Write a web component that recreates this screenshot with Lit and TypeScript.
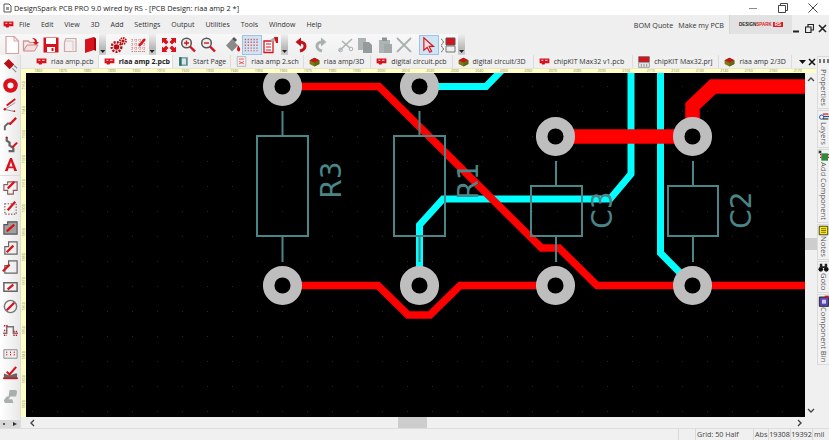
import { LitElement, css, html, svg } from 'lit'
import { customElement } from 'lit/decorators.js'

const MENU = ['File', 'Edit', 'View', '3D', 'Add', 'Settings', 'Output', 'Utilities', 'Tools', 'Window', 'Help']

type TabKind = 'pcb' | 'sch' | 'start' | '3d' | 'prj'
// pad is the space after the label, the tabs in the app are not evenly spaced
const TABS: { label: string; kind: TabKind; pad: number; active?: boolean }[] = [
  { label: 'riaa amp.pcb', kind: 'pcb', pad: 4 },
  { label: 'riaa amp 2.pcb', kind: 'pcb', pad: 2, active: true },
  { label: 'Start Page', kind: 'start', pad: 4 },
  { label: 'riaa amp 2.sch', kind: 'sch', pad: 4 },
  { label: 'riaa amp/3D', kind: '3d', pad: 6 },
  { label: 'digital circuit.pcb', kind: 'pcb', pad: 5 },
  { label: 'digital circuit/3D', kind: '3d', pad: 7 },
  { label: 'chipKIT Max32 v1.pcb', kind: 'pcb', pad: 8 },
  { label: 'chipKIT Max32.prj', kind: 'prj', pad: 6 },
  { label: 'riaa amp 2/3D', kind: '3d', pad: 5 },
]

const DOCK = [
  { label: 'Properties', icon: 'props' },
  { label: 'Layers', icon: 'layers' },
  { label: 'Add Component', icon: 'add' },
  { label: 'Notes', icon: 'notes' },
  { label: 'Goto', icon: 'goto' },
  { label: 'Component Bin', icon: 'bin' },
]

const RED = '#d8121c'

const icon = (body: unknown, size = 18) =>
  html`<svg width=${size} height=${size} viewBox="0 0 18 18" fill="none">${body}</svg>`

const TOP_LEFT = [
  svg`<path d="M3 .5h8l4.500 4.500v12.500H3z" fill="#fff" stroke="#dba0a0" stroke-width="1.200"/><path d="M11 .5V5h4.500" stroke="#dba0a0"/>`,
  svg`<path d="M1.500 15V5h5l1 1.500h5V9" stroke="#c99" stroke-width="1.300" fill="#f4eaea"/><path d="M1.500 15 5 9h11l-3.500 6z" fill="#f7dede" stroke="#c88"/><path d="M10 2c3 0 5 1 5 4l2 0-3 3-3-3h2c0-1.500-1-2.500-3-4z" fill=${RED}/>`,
  svg`<path d="M1.500 1.500h15v15h-15z" fill=${RED}/><path d="M4 2h10v6H4z" fill="#fff"/><path d="M5 11h8v5H5z" fill="#fff"/><path d="M9.500 12h2v3h-2z" fill=${RED}/>`,
  svg`<path d="M5 2.500h10v13H3.500V6z" fill="#f3efef" stroke="#c9a9a9" stroke-width="1.200"/><path d="M3 5h9v11" stroke="#d8c4c4"/>`,
  svg`<path d="M4 3.500 13 1v13l-9 3z" fill=${RED}/><path d="M13 1l2 1.500V15l-2-1z" fill="#a5000a"/>`,
]
const TOP_MID = [
  svg`<circle cx="6.500" cy="11" r="2.800" fill="#b80f16"/><circle cx="6.500" cy="11" r="4.800" fill="none" stroke="#b80f16" stroke-width="2.400" stroke-dasharray="2 1.200"/><circle cx="13" cy="5" r="1.600" fill="#b80f16"/><circle cx="13" cy="5" r="3" fill="none" stroke="#b80f16" stroke-width="1.800" stroke-dasharray="1.500 .8"/>`,
  svg`<path d="M2 3v13M6 3v13M10 3v13M14 3v13M2 4h13M2 8h13M2 12h13M2 15.500h13" stroke="#d67a7a" stroke-dasharray="1 1"/><path d="M9 10 15 3" stroke=${RED} stroke-width="2.400"/>`,
]
const TOP_VIEW = [
  svg`<path d="M2 2h5.500L6 3.500 8.500 6 6 8.500 3.500 6 2 7.500zM16 2v5.500L14.500 6 12 8.500 9.500 6 12 3.500 10.500 2zM2 16v-5.500L3.500 12 6 9.500 8.500 12 6 14.500 7.500 16zM16 16h-5.500L12 14.500 9.500 12 12 9.500 14.500 12 16 10.500z" fill=${RED}/>`,
  svg`<circle cx="7.500" cy="7" r="4.800" fill="#efefef" stroke="#555" stroke-width="1.500"/><path d="M5 7h5M7.500 4.500v5" stroke=${RED} stroke-width="1.400"/><path d="M11 10.500 16 15.500" stroke=${RED} stroke-width="2.400"/>`,
  svg`<circle cx="7.500" cy="7" r="4.800" fill="#efefef" stroke="#555" stroke-width="1.500"/><path d="M5 7h5" stroke=${RED} stroke-width="1.400"/><path d="M11 10.500 16 15.500" stroke=${RED} stroke-width="2.400"/>`,
]
const TOP_EDIT = [
  svg`<path d="M2 9.500 8 3l6 6.500-6 6z" fill="#8a8a8a"/><path d="M8 3l2-2 3 3-2 2z" fill="#555"/><path d="M14 9c1 2 3 3.500 2 5.500s-3 .5-3-1.500z" fill=${RED}/>`,
]
const GRID_ICON = svg`<path d="M2.500 2.500v13M5.500 2.500v13M8.500 2.500v13M11.500 2.500v13M14.500 2.500v13" stroke="#d65a5a" stroke-width="1.400" stroke-dasharray="1.500 1.500"/>`
const TOP_PROP = [
  svg`<path d="M2 5h9v11.500H2z" fill="#fff" stroke=${RED} stroke-width="1.300"/><path d="M4 8h5M4 11h5M4 14h5" stroke=${RED}/><path d="M8 4l5-3 3 2-6 3z" fill="#aaa"/><path d="M12 1h4v6h-2z" fill=${RED}/>`,
]
const TOP_HIST = [
  svg`<path d="M8 15c4-1 5-3 5-5s-2-4-5-4" stroke="#c4101a" stroke-width="3"/><path d="M9 1.500 3.500 6 9 10.500z" fill="#c4101a"/>`,
  svg`<path d="M10 15c-4-1-5-3-5-5s2-4 5-4" stroke="#aab0b0" stroke-width="3"/><path d="M9 1.500 14.500 6 9 10.500z" fill="#aab0b0"/>`,
]
const TOP_CLIP = [
  svg`<path d="M2 15 15 3M5 5l8 7" stroke="#aab0b0" stroke-width="1.500"/><circle cx="3.500" cy="14" r="1.800" stroke="#aab0b0"/><circle cx="14" cy="13" r="1.800" stroke="#aab0b0"/>`,
  svg`<path d="M2 2h8v12H2z" fill="#aeb3b3"/><path d="M7 6h6l3 3v8H7z" fill="#959a9a"/>`,
  svg`<path d="M3 4h11v13H3z" fill="#aeb3b3"/><path d="M6 1.500h5V5H6z" fill="#8f9494"/><path d="M8 8h8v9H8z" fill="#a2a7a7"/>`,
  svg`<path d="M2 2l14 14M16 2 2 16" stroke="#aab0b0" stroke-width="1.800"/>`,
]
const TOP_SELECT = svg`<path d="M4 1.500v13l3.500-3 2.500 5 2-1-2.500-5h4.500z" fill="#f6dede" stroke=${RED} stroke-width="1.200"/>`
const TOP_NEXT = svg`<path d="M7 2h9v7H7z" fill=${RED} stroke="#555"/><path d="M7 10h9v6H7z" fill="#eee" stroke="#777"/><path d="M2 3c2 0 1 3 3 3-2 0-1 3-3 3M2 10c2 0 1 3 3 3-2 0-1 3-3 3" stroke="#777"/>`

const SIDE: unknown[] = [
  svg`<path d="M2 7 7 2l6 6-5 5z" fill="#b80f16"/><path d="M11 12l4 4M13 9l3 3" stroke="#888" stroke-width="1.200"/>`,
  svg`<circle cx="9" cy="9" r="5.500" stroke=${RED} stroke-width="4.500"/>`,
  svg`<path d="M3 13 14 6" stroke="#999"/><path d="M5 9 14 2" stroke=${RED} stroke-width="2"/><path d="M2 13l10 2" stroke="#888"/><circle cx="3" cy="13" r="1.300" fill=${RED}/><circle cx="13" cy="15" r="1" fill=${RED}/>`,
  svg`<path d="M3 15v-4l3-3h3" stroke="#666" stroke-width="2"/><path d="M8 9 15 2" stroke=${RED} stroke-width="2.400"/>`,
  svg`<path d="M5 1v4l3 2v3l3 2 1 1v3H7" stroke="#666" stroke-width="2.400"/><path d="M11 12l5-5" stroke=${RED} stroke-width="2.200"/><circle cx="5" cy="1.500" r="1" fill=${RED}/>`,
  svg`<path d="M3 16 8.500 2h2L16 16h-3l-1-3H7l-1 3zM7.800 11h3.400L9.500 6z" fill=${RED}/>`,
  null,
  svg`<path d="M2 6h4V3h10v9h-4v4H6v-4H2z" stroke="#8c5a5a" stroke-width="1.200"/><path d="M6 10 13 3" stroke=${RED} stroke-width="2.400"/>`,
  svg`<path d="M3 5h12v11H3z" stroke="#8c5a5a" stroke-width="1.200" stroke-dasharray="1.500 1.500"/><path d="M6 12 14 3" stroke=${RED} stroke-width="2.400"/>`,
  svg`<path d="M2 6h4V3h10v13H2z" fill="#a0a0a0" stroke="#555" stroke-width="1.200"/><path d="M5 13 13 6" stroke=${RED} stroke-width="2.400"/>`,
  svg`<path d="M3 16V8h4V3h9v13z" stroke="#666" stroke-width="1.300"/><path d="M5 14 12 7" stroke=${RED} stroke-width="2.400"/>`,
  svg`<path d="M3 16V8h4V3h9v13z" stroke="#666" stroke-width="1.300"/><path d="M1 14 8 7" stroke=${RED} stroke-width="2.400"/>`,
  svg`<path d="M2 5h14v9H2z" stroke="#666" stroke-width="1.600"/><path d="M6 12l6-5" stroke=${RED} stroke-width="2.400"/>`,
  svg`<circle cx="9" cy="9" r="6.500" stroke="#777" stroke-width="1.500"/><path d="M5 13 13 5" stroke=${RED} stroke-width="2.400"/>`,
  null,
  svg`<path d="M1 13h4V6h7v7h5" stroke="#777" stroke-width="1.600"/><path d="M2 5h4M2 10h3M2 15h3M12 11h4M12 15h4" stroke=${RED} stroke-width="1.600" stroke-dasharray="1.500 1"/>`,
  null,
  svg`<path d="M2 5h14v9H2z" fill="#eee" stroke="#888"/><path d="M5 7v5M9 7v5M13 7v5" stroke=${RED} stroke-dasharray="1.500 1"/>`,
  svg`<path d="M2 15V9l3 1 3 1 3-1 3-1 2 0v6z" fill="#666"/><path d="M1 14h16" stroke=${RED} stroke-width="1.500"/><path d="M5 7l3 3 7-8" stroke=${RED} stroke-width="2.200"/>`,
  null,
  svg`<path d="M8 2h7l1 2-1 5H9l-2 3h4l1 4H3l-1-3 3-4h2z" fill="#a9aeae"/>`,
]

// board items use page coordinates through the viewBox of the canvas
const PADS: [number, number][] = [
  [282.5, 86.5], [419.5, 86.5], [555.5, 136.5], [692.5, 136.5],
  [282.5, 285.5], [419.5, 285.5], [555.5, 285.5], [692.5, 285.5],
]
const CYAN_TRACES = [
  '419,86.5 486,86.5 503,69',
  '419.500,285 419.500,225 443,199 610,199 631,174 631,60',
  '660.500,60 660.500,253 692.500,285.500',
]
const RED_TRACES: [string, number][] = [
  ['282,86.500 379,86.500 541.500,248 559,248 597,285.500 810,285.500', 7.500],
  ['282,285.500 378,285.500 408,315 430,315 460,285.500 555,285.500', 7.500],
  ['555,136.500 692.500,136.500', 14.500],
  ['692.500,136.500 692.500,106 713,86.500 810,86.500', 14.500],
]
const PARTS: { x: number; y: number; w: number; h: number; lead: number; name: string; tx: number; ty: number }[] = [
  { x: 257, y: 136, w: 51, h: 100, lead: 282.5, name: 'R3', tx: 341, ty: 180 },
  { x: 394, y: 136, w: 51, h: 100, lead: 419.5, name: 'R1', tx: 478, ty: 181 },
  { x: 531, y: 186, w: 51, h: 50, lead: 556, name: 'C3', tx: 612, ty: 210 },
  { x: 668, y: 186, w: 50, h: 50, lead: 693, name: 'C2', tx: 751, ty: 210 },
]

@customElement('app-root')
export class AppRoot extends LitElement {
  private renderBoard() {
    return html`
      <svg class="board" viewBox="26 73 779 344" preserveAspectRatio="none">
        <defs>
          <pattern id="dots" x="7" y="11" width="25" height="25" patternUnits="userSpaceOnUse">
            <rect width="1" height="1" fill="#262626"></rect>
          </pattern>
        </defs>
        <rect x="26" y="73" width="779" height="344" fill="#000"></rect>
        <rect x="26" y="73" width="779" height="344" fill="url(#dots)"></rect>
        ${CYAN_TRACES.map(
          (p) => svg`<polyline points=${p} fill="none" stroke="#00ffff" stroke-width="7"></polyline>`
        )}
        ${RED_TRACES.map(
          ([p, w]) => svg`<polyline points=${p} fill="none" stroke="#ff0000" stroke-width=${w}></polyline>`
        )}
        ${PADS.map(
          ([x, y]) => svg`<circle cx=${x} cy=${y} r="13.800" fill="#000" stroke="#bebebe" stroke-width="11.500"></circle>`
        )}
        ${PARTS.map(
          (c) => svg`
            <rect x=${c.x} y=${c.y} width=${c.w} height=${c.h} fill="none" stroke="#4a8587" stroke-width="2"></rect>
            <path d="M${c.lead} ${c.y === 136 ? 111 : 161}V${c.y}M${c.lead} 236V262" stroke="#4a8587" stroke-width="2"></path>
            <text class="ref" transform="translate(${c.tx} ${c.ty}) rotate(-90)" text-anchor="middle">${c.name}</text>
          `
        )}
      </svg>
    `
  }

  private tabIcon(kind: TabKind) {
    if (kind === 'pcb') {
      return icon(svg`<path d="M1 4h16v8h-7l-1 2H5l-1-2H1z" fill=${RED}/><path d="M4 7h3M10 7h4" stroke="#fff" stroke-width="1.500"/>`, 11)
    }
    if (kind === '3d') {
      return icon(svg`<path d="M1 7 9 3l8 4v6l-8 4-8-4z" fill="#7c7c14"/><path d="M1 7l8-4 8 4-8 4z" fill="#c3141a"/><path d="M9 11v6l8-4V7z" fill="#5f6a10"/>`, 11)
    }
    if (kind === 'start') {
      return icon(svg`<path d="M2 2h14v14H2z" fill="#5b8f9a"/><path d="M5 4h8v10H5z" fill="#d7e7e7"/><path d="M2 2h4v14H2z" fill="#2f6f6a"/>`, 11)
    }
    if (kind === 'sch') {
      return icon(svg`<path d="M2 1h14v16H2z" fill="#f5ecec" stroke="#999"/><path d="M5 5h8M5 9l8 4M13 9l-8 4" stroke=${RED}/>`, 11)
    }
    return icon(svg`<path d="M1 1h16v8H1z" fill=${RED} stroke="#555"/><path d="M1 10h16v7H1z" fill="#eee" stroke="#777"/><path d="M5 12v4M9 12v4M13 12v4" stroke="#555"/>`, 12)
  }

  private dockIcon(name: string) {
    if (name === 'props') return html`<span class="props-icon"></span>`
    if (name === 'layers') {
      return icon(svg`<circle cx="6" cy="10" r="3.500" stroke="#1c4fa0" stroke-width="1.600"/><path d="M8 5h9" stroke=${RED} stroke-width="2"/><path d="M9 9h9" stroke="#1c4fa0" stroke-width="2"/><path d="M8 13h9" stroke="#333" stroke-width="2"/>`, 11)
    }
    if (name === 'add') {
      return icon(svg`<path d="M1 1h4v4H1z" fill="#333"/><path d="M5 5h10v11H5z" fill="#2d8a3a"/><path d="M3 7h2M3 11h2M15 7h2M15 11h2" stroke=${RED} stroke-width="2"/>`, 12)
    }
    if (name === 'notes') {
      return icon(svg`<path d="M2 2h14v14H2z" fill="#ffee00" stroke="#222" stroke-width="1.400"/><path d="M5 6h8M5 9h8M5 12h8" stroke="#222"/>`, 11)
    }
    if (name === 'goto') {
      return icon(svg`<circle cx="4.500" cy="12" r="3.800" fill="#111"/><circle cx="13.500" cy="12" r="3.800" fill="#111"/><path d="M3 3h4v7H3zM11 3h4v7h-4zM6 7h6v3H6z" fill="#222"/>`, 11)
    }
    return icon(svg`<path d="M2 3h14v14H2z" fill="#5a48b0" stroke="#222" stroke-width="1.400"/><path d="M6 7h6v6H6z" fill="#cfc8f0"/><path d="M10 1h6v3h-6z" fill=${RED}/>`, 12)
  }

  private ticks(count: number) {
    return Array.from({ length: count }, (_, i) => i)
  }

  render() {
    return html`
      <div class="title">
        <svg class="app-icon" width="9" height="10" viewBox="0 0 9 10"><path d="M1 1h5l2 2v6H1z" fill="#fff" stroke="#555"></path><path d="M3 4h3v3H3z" fill="#999"></path></svg>
        <span class="title-text">DesignSpark PCB PRO 9.0 wired by RS - [PCB Design: riaa amp 2 *]</span>
        <span class="win">
          <svg width="10" height="10"><path d="M1 5.500h8" stroke="#8a8a8a"></path></svg>
          <svg width="10" height="10"><path d="M.5 2.500h7v7h-7zM2.500 2.500v-2h7v7h-2" fill="none" stroke="#444"></path></svg>
          <svg width="10" height="10"><path d="M.5.5l9 9M9.500.5l-9 9" stroke="#444"></path></svg>
        </span>
      </div>

      <div class="menu">
        <span class="menu-logo">
          ${icon(svg`<path d="M1 4h16v8h-7l-1 2H5l-1-2H1z" fill=${RED}/><path d="M4 7h3M10 7h4" stroke="#fff" stroke-width="1.500"/>`, 11)}
        </span>
        ${MENU.map((m) => html`<span class="menu-item">${m}</span>`)}
        <span class="spacer"></span>
        <span class="link">BOM Quote</span>
        <span class="link">Make my PCB</span>
        <span class="brand"><b>DESIGN</b><b class="spark">SPARK</b><b class="rs">RS</b></span>
        <span class="mdi">
          <svg width="9" height="9"><path d="M1 7.500h6" stroke="#222" stroke-width="2"></path></svg>
          <svg width="9" height="9"><path d="M.5 3h5.500v5.500H.5zM3 3V.5h5.500V6H6" fill="none" stroke="#222" stroke-width="1.200"></path></svg>
          <svg width="9" height="9"><path d="M1 1l7 7M8 1 1 8" stroke="#222" stroke-width="1.600"></path></svg>
        </span>
      </div>

      <div class="toolbar">
        <div class="tool-group first">
          ${TOP_LEFT.map((b) => html`<span class="tool">${icon(b)}</span>`)}
          <span class="grip"></span>
        </div>
        <div class="tool-group">
          ${TOP_MID.map((b) => html`<span class="tool">${icon(b)}</span>`)}
          <span class="grip"></span>
        </div>
        <div class="tool-group">
          ${TOP_VIEW.map((b) => html`<span class="tool">${icon(b)}</span>`)}
          <span class="gap"></span>
          ${TOP_EDIT.map((b) => html`<span class="tool">${icon(b)}</span>`)}
          <span class="tool on">${icon(GRID_ICON)}</span>
          ${TOP_PROP.map((b) => html`<span class="tool">${icon(b)}</span>`)}
          <span class="grip"></span>
        </div>
        <div class="tool-group">
          ${TOP_HIST.map((b) => html`<span class="tool">${icon(b)}</span>`)}
          <span class="gap"></span>
          ${TOP_CLIP.map((b) => html`<span class="tool">${icon(b)}</span>`)}
          <span class="gap"></span>
          <span class="tool on">${icon(TOP_SELECT)}</span>
          <span class="tool">${icon(TOP_NEXT)}</span>
          <span class="grip"></span>
        </div>
      </div>

      <div class="work">
        <div class="side">
          <div class="side-tools">
            ${SIDE.map((b, i) =>
              b === null
                ? html`<span class="side-gap ${i === 6 ? 'sep' : ''}"></span>`
                : html`<span class="side-tool">${icon(b, 17)}</span>`
            )}
          </div>
          <div class="side-foot">
            <svg width="3" height="8"><path d="M0 3h2v2H0z" fill="#555"></path></svg>
            <svg width="4" height="8"><path d="M0 2l4 2-4 2z" fill="#333"></path></svg>
          </div>
        </div>

        <div class="center">
          <div class="tabs">
            ${TABS.map(
              (t) => html`
                <span class="tab ${t.active ? 'active' : ''}" style="padding-right:${t.pad}px">${this.tabIcon(t.kind)}<span>${t.label}</span></span>
              `
            )}
            <span class="spacer"></span>
            <svg class="tab-ctl" width="8" height="6"><path d="M0 1h7L3.500 5z" fill="#111"></path></svg>
            <svg class="tab-ctl" width="8" height="8"><path d="M1 1l6 6M7 1 1 7" stroke="#111" stroke-width="1.500"></path></svg>
          </div>

          <div class="ruler-h">
            <span class="corner"></span>
            ${this.ticks(32).map((i) => html`<span class="tick">${1860 + i * 10}</span>`)}
          </div>

          <div class="view">
            <div class="ruler-v">
              ${this.ticks(14).map((i) => html`<span class="vtick">${1950 - i * 10}</span>`)}
            </div>
            ${this.renderBoard()}
            <div class="vscroll">
              <svg class="chev" width="8" height="6"><path d="M1 5l3-3 3 3" fill="none" stroke="#444" stroke-width="1.300"></path></svg>
              <span class="thumb"></span>
              <svg class="chev down" width="8" height="6"><path d="M1 1l3 3 3-3" fill="none" stroke="#444" stroke-width="1.300"></path></svg>
            </div>
          </div>

          <div class="hscroll">
            <svg width="6" height="8"><path d="M5 1 2 4l3 3" fill="none" stroke="#444" stroke-width="1.400"></path></svg>
            <span class="hthumb"></span>
            <svg width="6" height="8"><path d="M1 1l3 3-3 3" fill="none" stroke="#444" stroke-width="1.400"></path></svg>
          </div>
        </div>

        <div class="dock">
          ${DOCK.map(
            (d) => html`
              <div class="dock-tab">
                ${this.dockIcon(d.icon)}
                <span>${d.label}</span>
              </div>
            `
          )}
        </div>
      </div>

      <div class="status">
        <span class="spacer"></span>
        <span class="cell blank"></span>
        <span class="cell grid">Grid: 50 Half</span>
        <span class="cell abs">Abs</span>
        <span class="cell num">19308</span>
        <span class="cell num">19392</span>
        <span class="cell mil">mil</span>
      </div>
    `
  }

  static styles = css`
    :host {
      display: flex;
      flex-direction: column;
      width: 829px;
      height: 440px;
      overflow: hidden;
      background: #efefef;
      color: #333;
      font-family: 'Open Sans', 'Noto Sans', sans-serif;
      font-size: 7px;
    }

    .spacer {
      flex: 1;
    }

    .title {
      display: flex;
      align-items: center;
      height: 15px;
      padding-left: 3px;
      background: #fff;
      color: #222;
      font-size: 7.350px;
    }

    .app-icon {
      margin-right: 2px;
    }

    .title-text {
      flex: 1;
    }

    .win {
      display: flex;
      gap: 20px;
      padding-right: 11px;
    }

    .menu {
      display: flex;
      align-items: center;
      height: 19px;
      background: #efefef;
      font-size: 7px;
      color: #333;
    }

    .menu-logo {
      display: flex;
      width: 19px;
      padding-left: 3px;
      box-sizing: border-box;
    }

    .menu-item {
      margin-right: 10.900px;
    }

    .link {
      margin-right: 5px;
      font-size: 7.200px;
    }

    .brand {
      display: flex;
      align-items: center;
      justify-content: center;
      width: 63px;
      height: 19px;
      background: #e2e2e2;
      border-left: 1px solid #d6d6d6;
      box-sizing: border-box;
      font-family: 'Liberation Sans', sans-serif;
      font-size: 4.500px;
      color: #222;
    }

    .spark {
      color: #d81e26;
    }

    .rs {
      margin-left: 1px;
      padding: 0 2px;
      background: #d81e26;
      color: #fff;
    }

    .mdi {
      display: flex;
      align-items: flex-end;
      gap: 4px;
      height: 19px;
      padding: 0 2px 1px 0;
      box-sizing: border-box;
    }

    .toolbar {
      display: flex;
      height: 21px;
      background: #efefef;
    }

    .tool-group {
      display: flex;
      align-items: center;
      height: 21px;
      padding-left: 3.500px;
      background: linear-gradient(#f8f8f8, #f0f0f0);
    }

    .tool-group.first {
      padding-left: 2.300px;
    }

    .tool {
      display: flex;
      width: 19.400px;
      height: 20px;
      align-items: center;
      justify-content: center;
      flex: none;
    }

    .tool.on {
      background: #cfe4f5;
      border: 1px solid #9cc3e5;
      box-sizing: border-box;
    }

    .gap {
      width: 5.700px;
    }

    .grip {
      position: relative;
      width: 7px;
      height: 21px;
      background: linear-gradient(#f0f0f0, #b8b8b8 70%, #d0d0d0);
      flex: none;
    }

    .grip::after {
      content: '';
      position: absolute;
      left: 1px;
      bottom: 2px;
      width: 5px;
      height: 3px;
      background: #222;
      clip-path: polygon(0 0, 100% 0, 50% 100%);
    }

    .work {
      display: flex;
      flex: 1;
      min-height: 0;
    }

    .side {
      display: flex;
      flex-direction: column;
      width: 21px;
      flex: none;
      background: linear-gradient(90deg, #fff, #e8e8e8);
      border-right: 1px solid #ddd;
      box-sizing: border-box;
    }

    .side-tools {
      flex: 1;
      display: flex;
      flex-direction: column;
      padding-top: 1px;
    }

    .side-tool {
      display: flex;
      justify-content: center;
      height: 19.700px;
      align-items: center;
      flex: none;
    }

    .side-gap {
      height: 4px;
      flex: none;
    }

    .side-gap.sep {
      background: linear-gradient(#0000 1px, #dcdcdc 1px, #dcdcdc 2px, #0000 2px);
    }

    .side-foot {
      display: flex;
      justify-content: space-between;
      align-items: center;
      height: 8px;
      padding: 0 3px;
      background: #d8d8d8;
    }

    .center {
      display: flex;
      flex-direction: column;
      flex: 1;
      min-width: 0;
    }

    .tabs {
      display: flex;
      align-items: center;
      height: 13px;
      padding-left: 10px;
      background: #f0f0f0;
      font-size: 7px;
    }

    .tab {
      display: flex;
      align-items: center;
      gap: 4px;
      height: 13px;
      padding-left: 5px;
      border-right: 1px solid #dcdcdc;
      white-space: nowrap;
      color: #333;
    }

    .tab.active {
      font-weight: 700;
      color: #222;
      background: #fbfbfb;
    }

    .tab-ctl {
      flex: none;
      margin-right: 1px;
    }

    .ruler-h {
      display: flex;
      height: 4px;
      overflow: hidden;
      background: #ffffc4;
      border-top: 1px solid #e6e6d8;
      margin-right: 1px;
    }

    .corner {
      width: 5px;
      flex: none;
    }

    .tick {
      width: 24.500px;
      flex: none;
      font-size: 3.600px;
      line-height: 4px;
      color: #8a8a70;
      text-align: center;
    }

    .view {
      display: flex;
      flex: 1;
      min-height: 0;
    }

    .ruler-v {
      display: flex;
      flex-direction: column;
      width: 5px;
      flex: none;
      overflow: hidden;
      background: #ffffc4;
      box-sizing: border-box;
    }

    .vtick {
      height: 24.500px;
      flex: none;
      writing-mode: vertical-rl;
      transform: rotate(180deg);
      font-size: 3.600px;
      line-height: 5px;
      color: #8a8a70;
      text-align: center;
    }

    .board {
      display: block;
      width: 779px;
      height: 100%;
      flex: none;
    }

    .ref {
      fill: #4a8587;
      font-family: 'DejaVu Sans', sans-serif;
      font-size: 28px;
      font-weight: 400;
    }

    .vscroll {
      position: relative;
      flex: 1;
      background: #f0f0f0;
    }

    .chev {
      position: absolute;
      left: 2px;
      top: 3px;
    }

    .chev.down {
      top: auto;
      bottom: 3px;
    }

    .thumb {
      position: absolute;
      left: 0;
      right: 0;
      top: 165px;
      height: 12px;
      background: #cdcdcd;
    }

    .hscroll {
      display: flex;
      align-items: center;
      justify-content: space-between;
      height: 11px;
      padding: 0 14px 0 8px;
      background: #f0f0f0;
    }

    .hthumb {
      width: 29px;
      height: 11px;
      background: #cdcdcd;
      margin-right: 7px;
    }

    .dock {
      display: flex;
      flex-direction: column;
      width: 12px;
      flex: none;
      background: #f0f0f0;
      padding-top: 1px;
      box-sizing: border-box;
    }

    .dock-tab {
      display: flex;
      flex-direction: column;
      align-items: center;
      padding: 0 0 2px;
      margin-bottom: 1px;
      border: 1px solid #dadada;
      border-right: none;
      background: #f2f2f2;
      font-size: 7.600px;
      color: #555;
    }

    .dock-tab span {
      writing-mode: vertical-rl;
      white-space: nowrap;
      line-height: 10px;
    }

    .props-icon {
      width: 10px;
      height: 4px;
      margin: 2px 0 6px;
      background: repeating-linear-gradient(90deg, #777 0 2px, #eee 2px 4px);
    }

    .status {
      display: flex;
      align-items: stretch;
      height: 12px;
      background: #f0f0f0;
      border-top: 1px solid #ddd;
      box-sizing: border-box;
      font-size: 7.200px;
      line-height: 11px;
      color: #444;
    }

    .cell {
      border-left: 1px solid #d8d8d8;
      padding: 0 1px;
      box-sizing: border-box;
    }

    .cell.blank {
      width: 17px;
    }

    .cell.grid {
      width: 58px;
    }

    .cell.abs {
      width: 15px;
    }

    .cell.num {
      width: 22px;
      padding: 0;
      text-align: center;
      color: #333;
    }

    .cell.mil {
      width: 17px;
    }
  `
}

declare global {
  interface HTMLElementTagNameMap {
    'app-root': AppRoot
  }
}
